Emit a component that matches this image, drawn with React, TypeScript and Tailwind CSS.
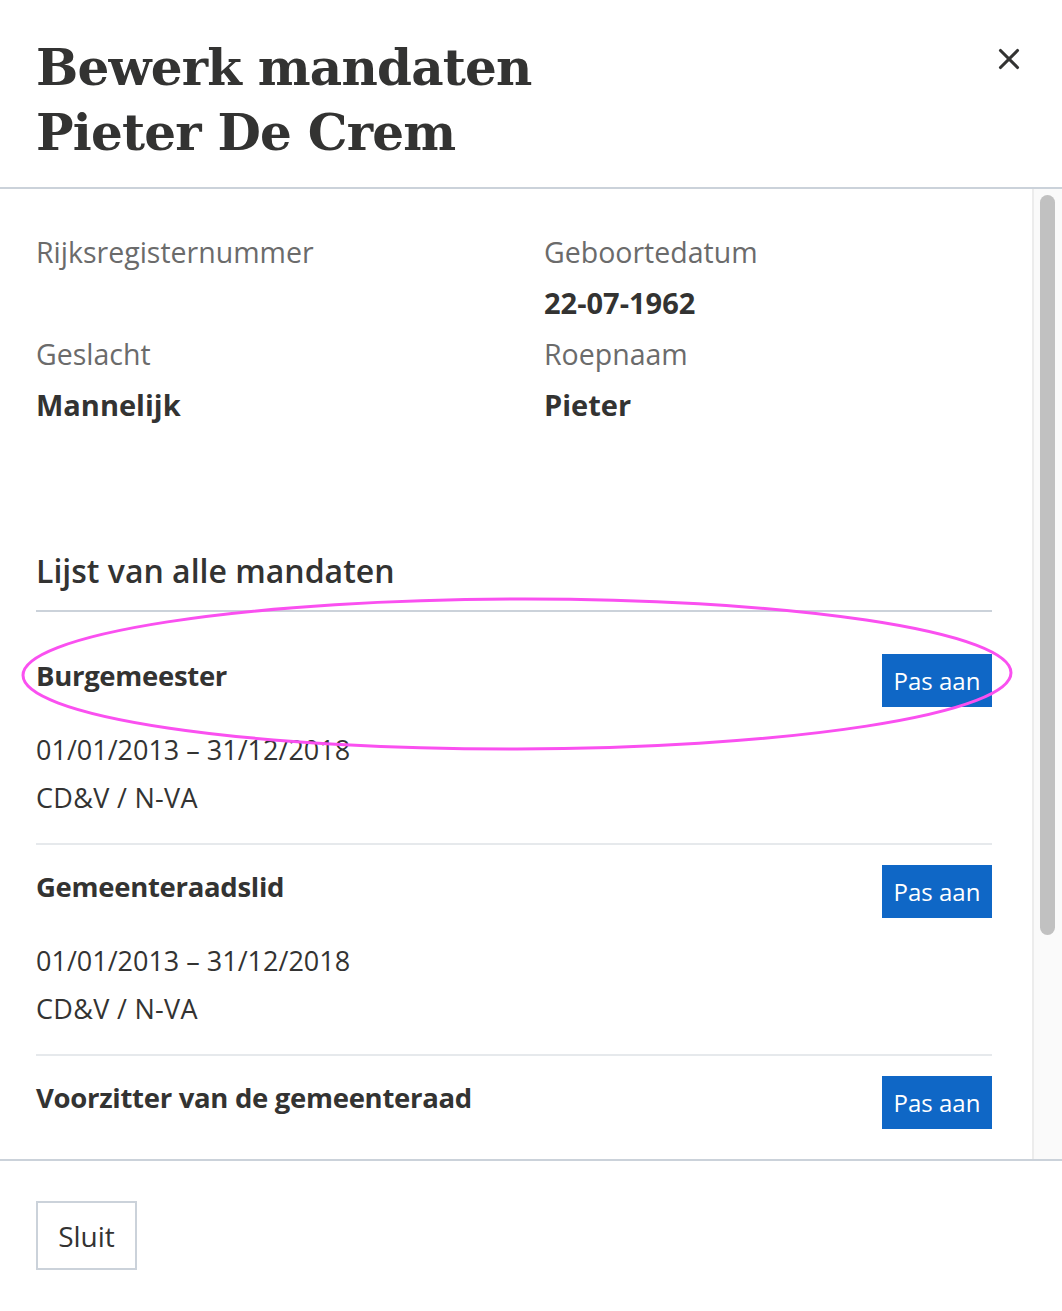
import { X } from 'lucide-react';

type Mandaat = {
  title: string;
  period?: string;
  party?: string;
};

// the last one is cut off by the scroll area, only its title row shows
const mandaten: Mandaat[] = [
  { title: 'Burgemeester', period: '01/01/2013 – 31/12/2018', party: 'CD&V / N-VA' },
  { title: 'Gemeenteraadslid', period: '01/01/2013 – 31/12/2018', party: 'CD&V / N-VA' },
  { title: 'Voorzitter van de gemeenteraad' },
];

function Field({ label, value }: { label: string; value?: string }) {
  return (
    <div>
      <p className="text-[28.5px] leading-[40px] text-[#6b6b6b]">{label}</p>
      {value && <p className="mt-[11px] text-[29px] leading-[40px] font-bold text-[#333332]">{value}</p>}
    </div>
  );
}

export default function App() {
  return (
    <div
      className="relative flex h-[1311px] w-[1062px] flex-col overflow-hidden bg-white text-[#333332]"
      style={{ fontFamily: '"Open Sans", "Noto Sans", sans-serif' }}
    >
      {/* header */}
      <header className="flex h-[189px] shrink-0 items-start justify-between border-b-2 border-[#cbd2da] pl-[36px] pr-[36px] pt-[35px]">
        <h1
          className="text-[50px] font-bold leading-[65px] tracking-[-0.8px] text-[#333332]"
          style={{ fontFamily: '"DejaVu Serif", "Liberation Serif", serif' }}
        >
          Bewerk mandaten
          <br />
          Pieter De Crem
        </h1>
        <button className="mt-[7px] text-[#333332]" type="button">
          <X size={34} strokeWidth={2.2} />
        </button>
      </header>

      {/* body */}
      <div className="flex min-h-0 flex-1">
        <div className="min-w-0 flex-1 overflow-hidden pl-[36px] pr-[40px] pt-[43px]">
          <div className="grid grid-cols-[508px_1fr] gap-y-[11px]">
            <Field label="Rijksregisternummer" />
            <Field label="Geboortedatum" value="22-07-1962" />
            <Field label="Geslacht" value="Mannelijk" />
            <Field label="Roepnaam" value="Pieter" />
          </div>

          <h2 className="mt-[124px] border-b-2 border-[#cbd2da] pb-[17px] text-[32px] font-semibold leading-[44px]">
            Lijst van alle mandaten
          </h2>

          <ul>
            {mandaten.map((m, i) => (
              <li
                key={m.title}
                className={`${i === 0 ? 'pt-[42px]' : 'pt-[20px]'} ${m.period ? 'border-b-2 border-[#e6e9ec] pb-[25px]' : ''}`}
              >
                <div className="flex items-start justify-between">
                  <p className="text-[27.5px] font-bold leading-[44px] tracking-[-0.3px]">{m.title}</p>
                  <button
                    type="button"
                    className="flex h-[53px] w-[110px] items-center justify-center bg-[#0f67c6] text-[24px] font-medium text-white"
                  >
                    Pas aan
                  </button>
                </div>
                {m.period && <p className="mt-[23px] text-[27px] leading-[40px]">{m.period}</p>}
                {m.party && <p className="mt-[8px] text-[27px] leading-[40px] tracking-[0.3px]">{m.party}</p>}
              </li>
            ))}
          </ul>
        </div>

        {/* scrollbar */}
        <div className="w-[30px] shrink-0 border-l-2 border-[#ececec] bg-[#fafafa] pl-[6px] pt-[6px]">
          <div className="h-[740px] w-[15px] rounded-full bg-[#c1c1c1]" />
        </div>
      </div>

      {/* footer */}
      <footer className="h-[152px] shrink-0 border-t-2 border-[#cbd2da] pl-[36px] pt-[40px]">
        <button
          type="button"
          className="h-[69px] w-[101px] border-2 border-[#cbd2da] bg-white text-[28px] leading-[40px] text-[#333332]"
        >
          Sluit
        </button>
      </footer>

      {/* annotation */}
      <svg className="pointer-events-none absolute left-0 top-0" width="1062" height="1311">
        <ellipse cx="517" cy="674" rx="494" ry="75" fill="none" stroke="#fa50f0" strokeWidth="3" transform="rotate(-0.15 517 674)" />
      </svg>
    </div>
  );
}
